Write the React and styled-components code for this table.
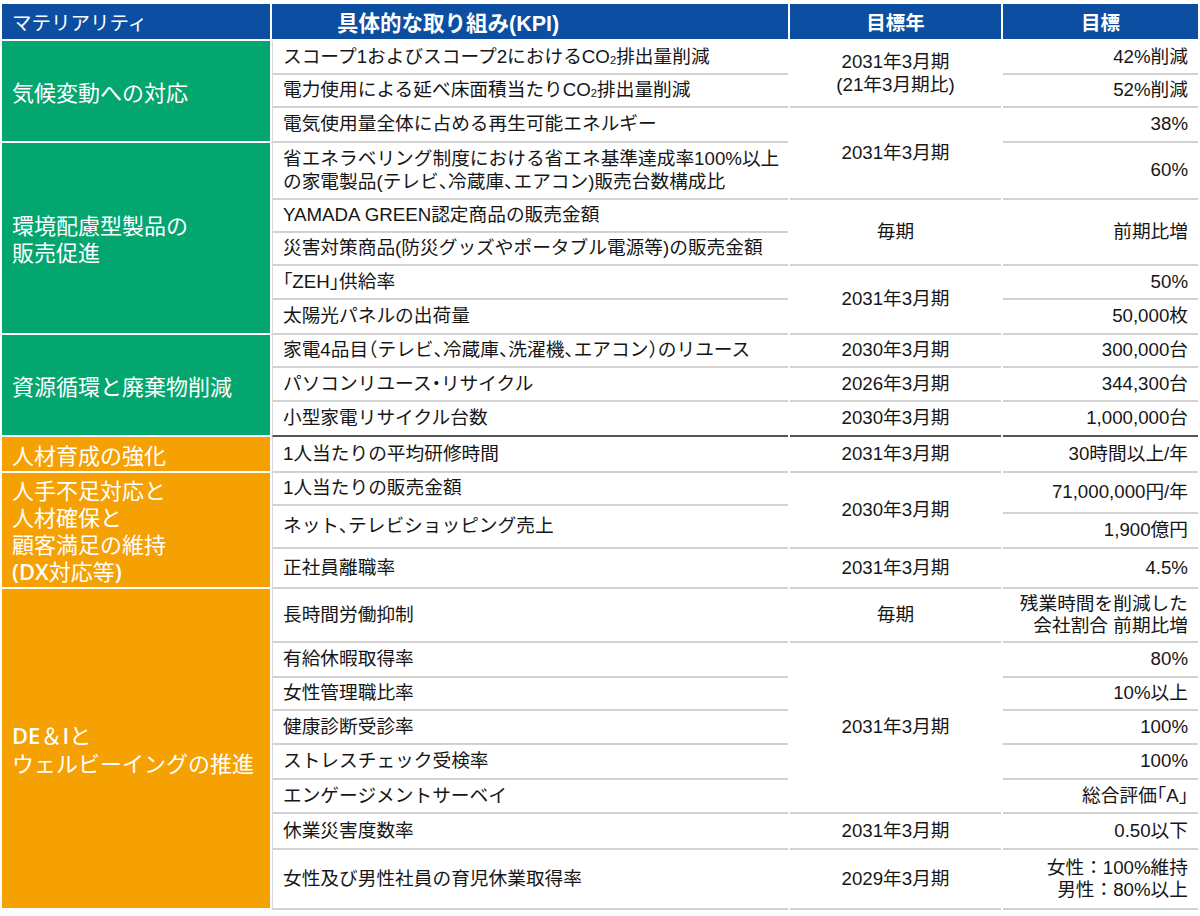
import React from 'react';
import styled, { createGlobalStyle } from 'styled-components';

const GlobalStyle = createGlobalStyle`
  *, *::before, *::after { box-sizing: border-box; }
  html, body { margin: 0; padding: 0; background: #fff; }
  body {
    font-family: "Liberation Sans", "Noto Sans CJK JP", sans-serif;
    color: #161616;
  }
`;

const COLS = '268px 516px 211px 195px';
const ROWS = [34, 33, 35, 57, 33, 33, 34, 35, 33, 34, 35, 36, 33, 8, 35, 40, 54, 35, 33, 34, 35, 34, 36, 60];
const TONES = { green: '#03a66f', orange: '#f5a104' };

const Page = styled.div`
  width: 1200px;
  padding-top: 4px;
`;

const HeaderRow = styled.div`
  display: grid;
  grid-template-columns: ${COLS};
  column-gap: 2px;
  padding: 0 2px;
  margin-bottom: 2px;
`;

const HeadCell = styled.div`
  height: 35px;
  background: #0c4ea2;
  color: #fff;
  display: flex;
  align-items: center;
  justify-content: ${(p) => (p.$center ? 'center' : 'flex-start')};
  padding-left: ${(p) => p.$indent || 0}px;
  font-size: ${(p) => p.$size || 19.5}px;
  font-weight: ${(p) => (p.$bold ? 700 : 400)};
  white-space: nowrap;
`;

const Body = styled.div`
  display: grid;
  grid-template-columns: ${COLS};
  grid-template-rows: ${ROWS.map((h) => `${h}px`).join(' ')};
  column-gap: 2px;
  padding: 0 2px;
`;

const Category = styled.div`
  grid-column: 1;
  grid-row: ${(p) => p.$row} / span ${(p) => p.$span};
  background: ${(p) => TONES[p.$tone]};
  border-bottom: 2px solid #fff;
  color: #fff;
  font-family: "Noto Sans CJK JP", sans-serif;
  font-size: 22px;
  line-height: 27px;
  display: flex;
  flex-direction: column;
  justify-content: center;
  padding: 0 10px;
  white-space: nowrap;
`;

const Latin = styled.span`
  font-family: "Open Sans", "Noto Sans CJK JP", sans-serif;
  font-weight: 600;
`;

const DataCell = styled.div`
  grid-row: ${(p) => p.$row} / span ${(p) => p.$span || 1};
  border-bottom: 2px solid ${(p) => (p.$strong ? '#555555' : '#d2d2d2')};
  display: flex;
  flex-direction: column;
  justify-content: center;
  font-size: 18.7px;
  line-height: 22.5px;
  white-space: nowrap;
`;

const KpiCell = styled(DataCell)`
  grid-column: 2;
  padding: 0 10px;
  border-left: 1px solid #d9d9d9;
  align-items: flex-start;
  font-feature-settings: "halt";
`;

const YearCell = styled(DataCell)`
  grid-column: 3;
  align-items: center;
  text-align: center;
`;

const TargetCell = styled(DataCell)`
  grid-column: 4;
  align-items: flex-end;
  text-align: right;
  padding-right: 10px;
`;

const Line = styled.span`
  display: block;
`;

const Tight = styled.span`
  font-feature-settings: "halt";
`;

const Sub = styled.sub`
  font-size: 0.6em;
  vertical-align: -0.1em;
  line-height: 0;
`;

const CO2 = () => (
  <>
    CO<Sub>2</Sub>
  </>
);

const categories = [
  { row: 1, span: 3, tone: 'green', lines: ['気候変動への対応'] },
  { row: 4, span: 5, tone: 'green', lines: ['環境配慮型製品の', '販売促進'] },
  { row: 9, span: 3, tone: 'green', lines: ['資源循環と廃棄物削減'] },
  { row: 12, span: 1, tone: 'orange', lines: ['人材育成の強化'] },
  {
    row: 13,
    span: 4,
    tone: 'orange',
    lines: [
      '人手不足対応と',
      '人材確保と',
      '顧客満足の維持',
      <>
        <Latin>(DX</Latin>対応等<Latin>)</Latin>
      </>,
    ],
  },
  {
    row: 17,
    span: 8,
    tone: 'orange',
    lines: [
      <>
        <Latin>DE</Latin>＆<Latin>I</Latin>と
      </>,
      'ウェルビーイングの推進',
    ],
  },
];

const kpis = [
  { row: 1, lines: [<>スコープ1およびスコープ2における<CO2 />排出量削減</>] },
  { row: 2, lines: [<>電力使用による延べ床面積当たり<CO2 />排出量削減</>] },
  { row: 3, lines: ['電気使用量全体に占める再生可能エネルギー'] },
  {
    row: 4,
    lines: ['省エネラベリング制度における省エネ基準達成率100%以上', 'の家電製品(テレビ、冷蔵庫、エアコン)販売台数構成比'],
  },
  { row: 5, lines: ['YAMADA GREEN認定商品の販売金額'] },
  { row: 6, lines: ['災害対策商品(防災グッズやポータブル電源等)の販売金額'] },
  { row: 7, lines: ['「ZEH」供給率'] },
  { row: 8, lines: ['太陽光パネルの出荷量'] },
  { row: 9, lines: ['家電4品目（テレビ、冷蔵庫、洗濯機、エアコン）のリユース'] },
  { row: 10, lines: ['パソコンリユース・リサイクル'] },
  { row: 11, strong: true, lines: ['小型家電リサイクル台数'] },
  { row: 12, lines: ['1人当たりの平均研修時間'] },
  { row: 13, lines: ['1人当たりの販売金額'] },
  { row: 14, span: 2, lines: ['ネット、テレビショッピング売上'] },
  { row: 16, lines: ['正社員離職率'] },
  { row: 17, lines: ['長時間労働抑制'] },
  { row: 18, lines: ['有給休暇取得率'] },
  { row: 19, lines: ['女性管理職比率'] },
  { row: 20, lines: ['健康診断受診率'] },
  { row: 21, lines: ['ストレスチェック受検率'] },
  { row: 22, lines: ['エンゲージメントサーベイ'] },
  { row: 23, lines: ['休業災害度数率'] },
  { row: 24, lines: ['女性及び男性社員の育児休業取得率'] },
];

const years = [
  { row: 1, span: 2, lines: ['2031年3月期', '(21年3月期比)'] },
  { row: 3, span: 2, lines: ['2031年3月期'] },
  { row: 5, span: 2, lines: ['毎期'] },
  { row: 7, span: 2, lines: ['2031年3月期'] },
  { row: 9, lines: ['2030年3月期'] },
  { row: 10, lines: ['2026年3月期'] },
  { row: 11, strong: true, lines: ['2030年3月期'] },
  { row: 12, lines: ['2031年3月期'] },
  { row: 13, span: 3, lines: ['2030年3月期'] },
  { row: 16, lines: ['2031年3月期'] },
  { row: 17, lines: ['毎期'] },
  { row: 18, span: 5, lines: ['2031年3月期'] },
  { row: 23, lines: ['2031年3月期'] },
  { row: 24, lines: ['2029年3月期'] },
];

const targets = [
  { row: 1, lines: ['42%削減'] },
  { row: 2, lines: ['52%削減'] },
  { row: 3, lines: ['38%'] },
  { row: 4, lines: ['60%'] },
  { row: 5, span: 2, lines: ['前期比増'] },
  { row: 7, lines: ['50%'] },
  { row: 8, lines: ['50,000枚'] },
  { row: 9, lines: ['300,000台'] },
  { row: 10, lines: ['344,300台'] },
  { row: 11, strong: true, lines: ['1,000,000台'] },
  { row: 12, lines: ['30時間以上/年'] },
  { row: 13, span: 2, lines: ['71,000,000円/年'] },
  { row: 15, lines: ['1,900億円'] },
  { row: 16, lines: ['4.5%'] },
  { row: 17, lines: ['残業時間を削減した', '会社割合 前期比増'] },
  { row: 18, lines: ['80%'] },
  { row: 19, lines: ['10%以上'] },
  { row: 20, lines: ['100%'] },
  { row: 21, lines: ['100%'] },
  { row: 22, lines: [<>総合評価<Tight>「A」</Tight></>] },
  { row: 23, lines: ['0.50以下'] },
  { row: 24, lines: ['女性：100%維持', '男性：80%以上'] },
];

const renderLines = (lines) => lines.map((l, i) => <Line key={i}>{l}</Line>);

export default function App() {
  return (
    <Page>
      <GlobalStyle />
      <HeaderRow>
        <HeadCell $indent={10}>マテリアリティ</HeadCell>
        <HeadCell $indent={65} $size={21.5} $bold>
          具体的な取り組み(KPI)
        </HeadCell>
        <HeadCell $center $bold>
          目標年
        </HeadCell>
        <HeadCell $center $bold>
          目標
        </HeadCell>
      </HeaderRow>
      <Body>
        {categories.map((c) => (
          <Category key={`c${c.row}`} $row={c.row} $span={c.span} $tone={c.tone}>
            {renderLines(c.lines)}
          </Category>
        ))}
        {kpis.map((k) => (
          <KpiCell key={`k${k.row}`} $row={k.row} $span={k.span} $strong={k.strong}>
            {renderLines(k.lines)}
          </KpiCell>
        ))}
        {years.map((y) => (
          <YearCell key={`y${y.row}`} $row={y.row} $span={y.span} $strong={y.strong}>
            {renderLines(y.lines)}
          </YearCell>
        ))}
        {targets.map((t) => (
          <TargetCell key={`t${t.row}`} $row={t.row} $span={t.span} $strong={t.strong}>
            {renderLines(t.lines)}
          </TargetCell>
        ))}
      </Body>
    </Page>
  );
}
